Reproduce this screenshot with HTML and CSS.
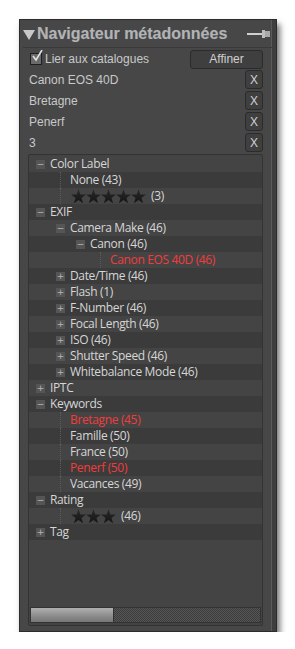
FILE: index.html
```html
<!DOCTYPE html>
<html lang="fr">
<head>
    <meta charset="UTF-8">
    <title>Navigateur métadonnées</title>
    <link rel="stylesheet" href="styles.css">
</head>
<body>
    <svg width="0" height="0" class="defs">
        <defs>
            <linearGradient id="starFill" x1="0" y1="0" x2="0" y2="1">
                <stop offset="0" stop-color="#2a2a2a"/>
                <stop offset="1" stop-color="#141414"/>
            </linearGradient>
            <symbol id="star" viewBox="0 0 15 15">
                <polygon points="7.5,0.2 9.32,5.49 14.92,5.59 10.45,8.96 12.08,14.31 7.5,11.1 2.92,14.31 4.55,8.96 0.08,5.59 5.68,5.49" fill="url(#starFill)"/>
            </symbol>
        </defs>
    </svg>

    <div class="panel">
        <div class="panel-head">
            <svg class="arrow" width="12" height="10" viewBox="0 0 12 10"><polygon points="0,0 12,0 6,10" fill="#c8c8c8"/></svg>
            <span class="title">Navigateur métadonnées</span>
            <svg class="pin" width="24" height="10" viewBox="0 0 24 10">
                <rect x="0" y="4" width="15" height="2" fill="#cfcfcf"/>
                <rect x="15" y="1" width="3" height="8" fill="#bdbdbd"/>
                <rect x="18" y="2" width="5" height="6" fill="#a9a9a9"/>
            </svg>
        </div>

        <div class="options">
            <label class="link">
                <span class="check">
                    <svg width="12" height="12" viewBox="0 0 12 12"><path d="M2 6 L5 10 L11 0" stroke="#e0e0e0" stroke-width="1.6" fill="none"/></svg>
                </span>
                Lier aux catalogues
            </label>
            <button class="btn">Affiner</button>
        </div>

        <div class="filter"><span>Canon EOS 40D</span><button class="x">X</button></div>
        <div class="filter"><span>Bretagne</span><button class="x">X</button></div>
        <div class="filter"><span>Penerf</span><button class="x">X</button></div>
        <div class="filter"><span>3</span><button class="x">X</button></div>

        <div class="tree">
            <div class="row lv0"><span class="exp">−</span>Color Label</div>
            <div class="row lv1"><span class="leaf"></span>None (43)</div>
            <div class="row lv1"><span class="leaf"></span>
                <svg class="stars" width="75" height="15"><use href="#star" x="0" width="15" height="15"/><use href="#star" x="15" width="15" height="15"/><use href="#star" x="30" width="15" height="15"/><use href="#star" x="45" width="15" height="15"/><use href="#star" x="60" width="15" height="15"/></svg>(3)</div>
            <div class="row lv0"><span class="exp">−</span>EXIF</div>
            <div class="row lv1"><span class="exp">−</span>Camera Make (46)</div>
            <div class="row lv2"><span class="exp">−</span>Canon (46)</div>
            <div class="row lv3 sel"><span class="leaf"></span>Canon EOS 40D (46)</div>
            <div class="row lv1"><span class="exp">+</span>Date/Time (46)</div>
            <div class="row lv1"><span class="exp">+</span>Flash (1)</div>
            <div class="row lv1"><span class="exp">+</span>F-Number (46)</div>
            <div class="row lv1"><span class="exp">+</span>Focal Length (46)</div>
            <div class="row lv1"><span class="exp">+</span>ISO (46)</div>
            <div class="row lv1"><span class="exp">+</span>Shutter Speed (46)</div>
            <div class="row lv1"><span class="exp">+</span>Whitebalance Mode (46)</div>
            <div class="row lv0"><span class="exp">+</span>IPTC</div>
            <div class="row lv0"><span class="exp">−</span>Keywords</div>
            <div class="row lv1 sel"><span class="leaf"></span>Bretagne (45)</div>
            <div class="row lv1"><span class="leaf"></span>Famille (50)</div>
            <div class="row lv1"><span class="leaf"></span>France (50)</div>
            <div class="row lv1 sel"><span class="leaf"></span>Penerf (50)</div>
            <div class="row lv1"><span class="leaf"></span>Vacances (49)</div>
            <div class="row lv0"><span class="exp">−</span>Rating</div>
            <div class="row lv1"><span class="leaf"></span>
                <svg class="stars" width="45" height="15"><use href="#star" x="0" width="15" height="15"/><use href="#star" x="15" width="15" height="15"/><use href="#star" x="30" width="15" height="15"/></svg>(46)</div>
            <div class="row lv0"><span class="exp">+</span>Tag</div>

            <div class="tree-fill"></div>
            <div class="hscroll"><div class="thumb"></div></div>
        </div>
    </div>
</body>
</html>
```

FILE: styles.css
```css
body,
html {
    margin: 0;
    background-color: #fff;
    font-family: "Liberation Sans", Arial, sans-serif;
}

.defs {
    position: absolute;
}

.panel {
    margin: 19px 0 0 19px;
    width: 235px;
    height: 606px;
    padding: 0 13px 5px 8px;
    background-color: #474747;
    border: 1px solid #2c2c2c;
    box-shadow: inset -4px 0 0 #3e3e3e, inset -5px 0 0 #5a5a5a, 3px 5px 6px rgba(0, 0, 0, 0.55);
    display: flex;
    flex-direction: column;
}

.panel-head {
    height: 27px;
    display: flex;
    align-items: center;
    margin-left: -5px;
    margin-right: -10px;
    border-bottom: 1px solid #3a3a3a;
}

.arrow {
    margin: 2px 2px 0 0;
}

.title {
    flex: 1;
    font-size: 16px;
    font-weight: bold;
    color: #b3b3b3;
    text-shadow: 0 0 1px #5c6670;
}

.pin {
    margin-right: 2px;
}

.options {
    height: 20px;
    display: flex;
    align-items: center;
    justify-content: space-between;
    margin-top: 1px;
}

.link {
    display: flex;
    align-items: center;
    font-size: 12px;
    color: #c9c9c9;
}

.check {
    width: 10px;
    height: 10px;
    border: 1px solid #1f1f1f;
    background-color: #6a6a6a;
    margin: 0 3px 0 2px;
    position: relative;
}

.check svg {
    position: absolute;
    left: 0;
    top: -4px;
}

.btn {
    width: 73px;
    height: 19px;
    padding: 0;
    font-family: inherit;
    font-size: 12px;
    color: #d0d0d0;
    background-color: #3f3f3f;
    border: 1px solid #2b2b2b;
    border-radius: 3px;
}

.filter {
    height: 21px;
    display: flex;
    align-items: center;
    justify-content: space-between;
    font-size: 12px;
    color: #c9c9c9;
    padding-left: 1px;
}

.x {
    width: 18px;
    height: 19px;
    padding: 0;
    font-family: inherit;
    font-size: 12px;
    color: #d0d0d0;
    background-color: #3f3f3f;
    border: 1px solid #2b2b2b;
    border-radius: 3px;
}

.tree {
    flex: 1;
    margin-top: 1px;
    display: flex;
    flex-direction: column;
    background-color: #444;
    border: 1px solid #333;
    border-radius: 2px;
    padding-top: 1px;
    font-family: "Open Sans", sans-serif;
    font-size: 12px;
    letter-spacing: -0.35px;
    color: #d6d6d6;
}

.row {
    height: 16px;
    line-height: 16px;
    display: flex;
    align-items: center;
    white-space: nowrap;
}

.row:nth-child(even) {
    background-color: #3b3b3b;
}

.lv0 { padding-left: 7px; }
.lv1 { padding-left: 27px; }
.lv2 { padding-left: 47px; }
.lv3 { padding-left: 67px; }

.exp {
    width: 9px;
    height: 9px;
    margin-right: 5px;
    background-color: #555;
    color: #b5b5b5;
    font-family: "DejaVu Sans", sans-serif;
    font-size: 9px;
    line-height: 9px;
    letter-spacing: 0;
    text-align: center;
}

.leaf {
    width: 5px;
    height: 16px;
    margin-left: 4px;
    margin-right: 5px;
    border-left: 1px dotted #5c5c5c;
    box-sizing: border-box;
}

.stars {
    margin: 1px 5px 0 1px;
}

.sel {
    color: #f23c3c;
}

.tree-fill {
    flex: 1;
}

.hscroll {
    height: 14px;
    margin: 0 1px 2px 1px;
    border: 1px solid #333;
    background-color: #4a4a4a;
    background-image: repeating-conic-gradient(#3c3c3c 0 25%, #565656 0 50%);
    background-size: 2px 2px;
    display: flex;
}

.thumb {
    width: 82px;
    background: linear-gradient(#b0b0b0, #8a8a8a 60%, #777);
    border-right: 1px solid #333;
}
```
